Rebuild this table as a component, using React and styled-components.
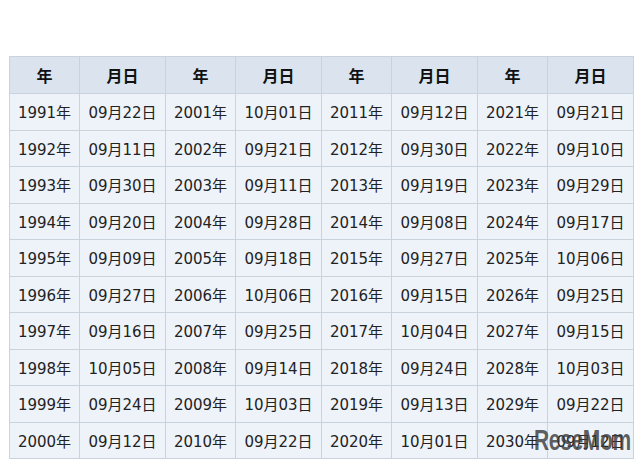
import styled, { createGlobalStyle } from 'styled-components';

const GlobalStyle = createGlobalStyle`
  html, body {
    margin: 0;
    padding: 0;
    background: #ffffff;
  }
  body {
    font-family: "DejaVu Sans", "Noto Sans CJK JP", sans-serif;
  }
`;

const data = [
  [1991, '09月22日', 2001, '10月01日', 2011, '09月12日', 2021, '09月21日'],
  [1992, '09月11日', 2002, '09月21日', 2012, '09月30日', 2022, '09月10日'],
  [1993, '09月30日', 2003, '09月11日', 2013, '09月19日', 2023, '09月29日'],
  [1994, '09月20日', 2004, '09月28日', 2014, '09月08日', 2024, '09月17日'],
  [1995, '09月09日', 2005, '09月18日', 2015, '09月27日', 2025, '10月06日'],
  [1996, '09月27日', 2006, '10月06日', 2016, '09月15日', 2026, '09月25日'],
  [1997, '09月16日', 2007, '09月25日', 2017, '10月04日', 2027, '09月15日'],
  [1998, '10月05日', 2008, '09月14日', 2018, '09月24日', 2028, '10月03日'],
  [1999, '09月24日', 2009, '10月03日', 2019, '09月13日', 2029, '09月22日'],
  [2000, '09月12日', 2010, '09月22日', 2020, '10月01日', 2030, '09月12日'],
];

function App() {
  return (
    <>
      <GlobalStyle />
      <Page>
        <Table>
          <colgroup>
            {[0, 1, 2, 3].map(i => [
              <col key={'y' + i} style={{ width: 70 }} />,
              <col key={'d' + i} style={{ width: 86 }} />,
            ])}
          </colgroup>
          <thead>
            <tr>
              {[0, 1, 2, 3].map(i => [
                <Head key={'y' + i}>年</Head>,
                <Head key={'d' + i}>月日</Head>,
              ])}
            </tr>
          </thead>
          <tbody>
            {data.map((row, r) => (
              <tr key={r}>
                {row.map((v, c) => (
                  <Cell key={c}>{c % 2 === 0 ? v + '年' : v}</Cell>
                ))}
              </tr>
            ))}
          </tbody>
        </Table>
        <Watermark>ReseMom</Watermark>
      </Page>
    </>
  );
}

const Page = styled.div`
  position: relative;
  width: 640px;
  height: 467px;
  padding: 56px 0 0 9px;
  box-sizing: border-box;
`;

const Table = styled.table`
  border-collapse: collapse;
  table-layout: fixed;
  width: 625px;
  border: 1px solid #c9d3de;
`;

const Head = styled.th`
  height: 36px;
  padding: 0;
  background: #dbe4ee;
  border: 1px solid #c9d3de;
  font-size: 16px;
  font-weight: bold;
  color: #111;
  text-align: center;
`;

const Cell = styled.td`
  height: 35.5px;
  padding: 0;
  background: #eef3fa;
  border: 1px solid #c9d3de;
  font-size: 15px;
  color: #222;
  text-align: center;
  white-space: nowrap;
`;

const Watermark = styled.div`
  position: absolute;
  left: 534px;
  top: 423px;
  font-family: "Liberation Sans", "DejaVu Sans", sans-serif;
  font-size: 30px;
  font-weight: bold;
  letter-spacing: -0.5px;
  white-space: nowrap;
  color: rgba(60, 60, 60, 0.82);
  transform: scaleX(0.7);
  transform-origin: left center;
`;

export default App;
